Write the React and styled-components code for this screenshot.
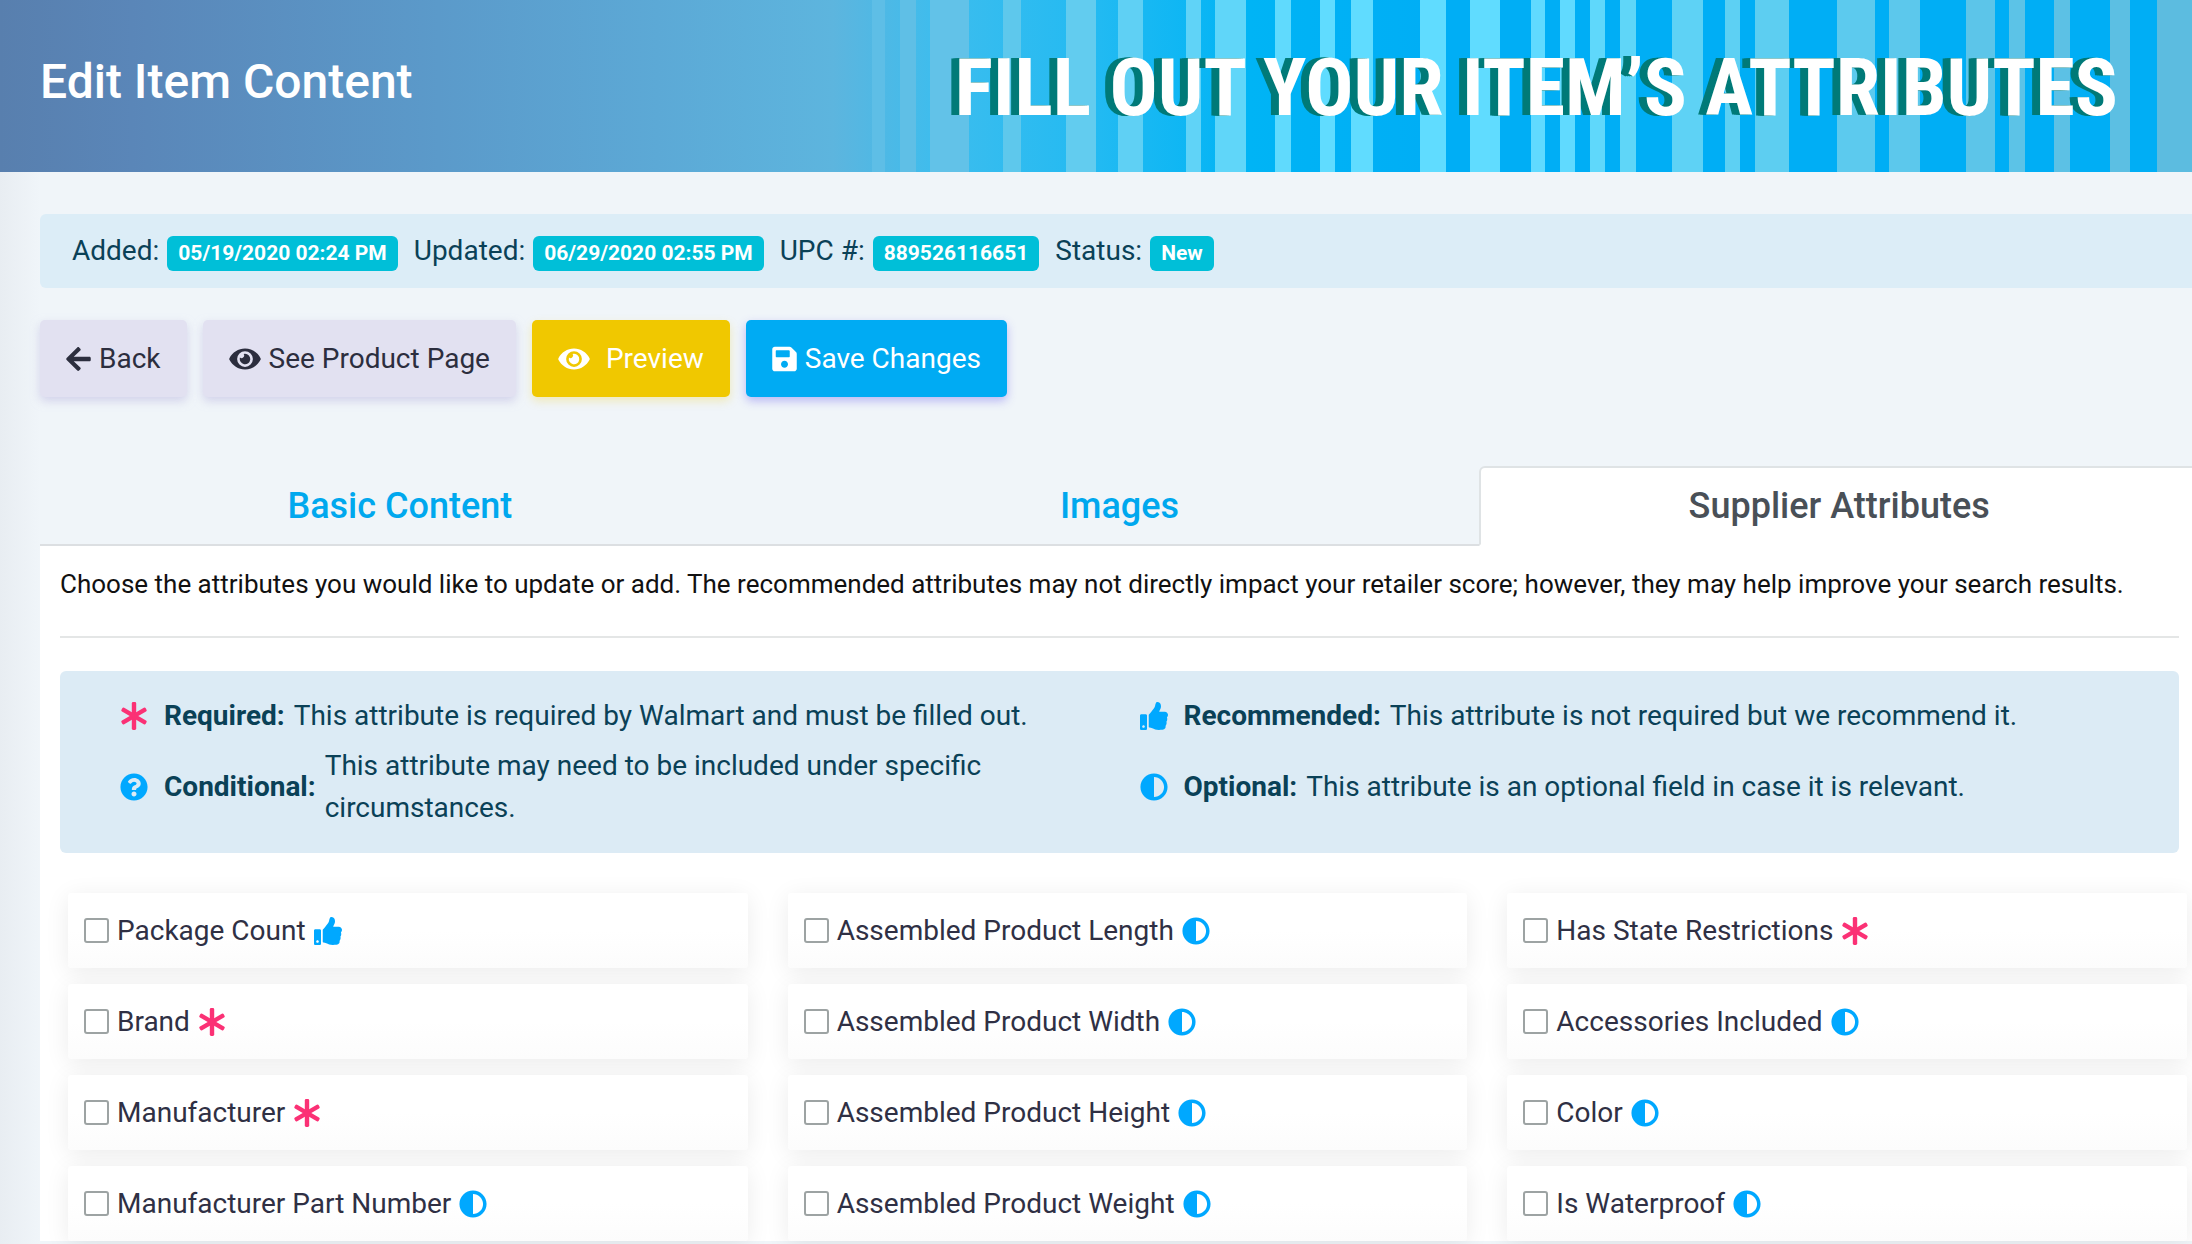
import React, { useState } from "react";
import styled, { createGlobalStyle, css } from "styled-components";
import {
  FaAdjust,
  FaArrowLeft,
  FaEye,
  FaQuestionCircle,
  FaSave,
  FaThumbsUp,
} from "react-icons/fa";

const GlobalStyle = createGlobalStyle`
  * {
    box-sizing: border-box;
  }

  body {
    margin: 0;
    background: #f0f5f9;
    color: #212529;
    font-family: Roboto, "Liberation Sans", sans-serif;
    font-size: 28px;
    line-height: 42px;
  }
`;

// [start, end, colour], positions on a 2192 wide banner
const stripes = [
  [872, 885, "#5ebee6"],
  [900, 916, "#5fbfe6"],
  [930, 969, "#62c2e8"],
  [1003, 1021, "#5ec8ec"],
  [1066, 1096, "#62ccef"],
  [1118, 1143, "#5fd0f4"],
  [1186, 1201, "#60d3f7"],
  [1215, 1246, "#60d6f9"],
  [1275, 1291, "#60dafd"],
  [1320, 1335, "#60dcff"],
  [1351, 1373, "#60dcff"],
  [1420, 1446, "#60dcff"],
  [1470, 1500, "#60dcff"],
  [1531, 1545, "#60daff"],
  [1560, 1575, "#60daff"],
  [1590, 1605, "#5fd8fb"],
  [1620, 1636, "#5fd6f8"],
  [1672, 1703, "#5ed2f5"],
  [1725, 1740, "#5dd0f3"],
  [1755, 1789, "#5dcef1"],
  [1837, 1875, "#5ccaee"],
  [1889, 1920, "#5cc8ec"],
  [1966, 1995, "#5cc5e9"],
  [2009, 2025, "#5cc3e7"],
  [2054, 2070, "#5cc1e5"],
  [2110, 2130, "#5cbfe3"],
  [2157, 2192, "#5cbce0"],
];

const pct = (x) => `${((x / 2192) * 100).toFixed(3)}%`;

const stripeStops = stripes
  .map(
    ([from, to, color]) =>
      `transparent ${pct(from)}, ${color} ${pct(from)}, ${color} ${pct(
        to
      )}, transparent ${pct(to)}`
  )
  .join(", ");

const Header = styled.header`
  display: flex;
  align-items: center;
  justify-content: space-between;
  height: 172px;
  padding: 0 74px 0 40px;
  background: linear-gradient(90deg, ${stripeStops}),
    linear-gradient(
      90deg,
      #587fae 0%,
      #5a86b8 6%,
      #5b9aca 20%,
      #5ca9d6 30%,
      #5db5de 38%,
      #3cbdee 43%,
      #22baf2 50%,
      #00b4f5 57%,
      #00aef5 65%,
      #00aef5 100%
    );
`;

const Title = styled.h1`
  margin: 0;
  padding-bottom: 8px;
  color: #fff;
  font-size: 48px;
  font-weight: 500;
  line-height: 56px;
`;

const Slogan = styled.p`
  margin: 0;
  padding-top: 4px;
  color: #fff;
  font-family: "Roboto Condensed", "Liberation Sans Narrow", Roboto, sans-serif;
  font-size: 80px;
  font-weight: 700;
  line-height: 96px;
  text-transform: uppercase;
  white-space: nowrap;
  text-shadow: -2px 0 #007a78, -4px 0 #007a78, -6px 0 #007a78, -8px 0 #007a78;
`;

const Page = styled.main`
  min-height: calc(100vh - 172px);
  padding: 42px 0 0 40px;
  overflow: hidden;
  background: linear-gradient(90deg, #e8edf2 0, #f0f5f9 40px);
`;

const Info = styled.section`
  display: flex;
  align-items: center;
  gap: 16px;
  height: 74px;
  padding: 0 32px;
  border-radius: 6px 0 0 6px;
  background: #dcedf7;
  color: #0a4157;
`;

const InfoItem = styled.span`
  display: flex;
  align-items: baseline;
  gap: 8px;
`;

const Badge = styled.span`
  padding: 0 11px;
  border-radius: 6px;
  background: #00bfd8;
  color: #fff;
  font-size: 21px;
  font-weight: 700;
  line-height: 35px;
`;

const Actions = styled.div`
  display: flex;
  gap: 16px;
  margin: 32px 0 69px;
`;

const tones = {
  light: css`
    background: #e2e1f1;
    color: #2c2e3e;
    box-shadow: 0 4px 10px rgba(190, 186, 225, 0.6);
  `,
  warning: css`
    background: #f0c800;
    color: #fff;
    box-shadow: 0 4px 10px rgba(240, 200, 0, 0.25);
  `,
  primary: css`
    background: #00abf3;
    color: #fff;
    box-shadow: 0 4px 10px rgba(120, 110, 240, 0.45);
  `,
};

const Button = styled.button`
  display: flex;
  align-items: center;
  gap: ${({ $spaced }) => ($spaced ? "16px" : "8px")};
  height: 77px;
  padding: 0 26px;
  border: 0;
  border-radius: 5px;
  font: inherit;
  cursor: pointer;
  ${({ $tone }) => tones[$tone]}

  svg {
    flex: none;
    width: ${({ $icon }) => ($icon === "wide" ? "32px" : "25px")};
    height: 28px;
  }
`;

const Wide = styled.div`
  margin-right: -7px;
`;

const Tabs = styled.div`
  display: grid;
  grid-template-columns: repeat(3, 1fr);
`;

const Tab = styled.button`
  height: 80px;
  padding: 2px 0 0;
  border: 0;
  border-bottom: 2px solid #dcdfe2;
  background: transparent;
  color: #00a8ee;
  font: inherit;
  font-size: 36px;
  font-weight: 500;
  cursor: pointer;

  ${({ $active }) =>
    $active &&
    css`
      padding: 0;
      border: 2px solid #dfe3e5;
      border-bottom-color: #fff;
      border-radius: 6px 6px 0 0;
      background: #fff;
      color: #495057;
    `}
`;

const Panel = styled.section`
  padding: 17px 20px 0;
  background: #fff;
`;

const Intro = styled.p`
  margin: 0;
  color: #111;
  font-size: 26px;
`;

const Rule = styled.hr`
  height: 2px;
  margin: 31px 0 33px;
  border: 0;
  background: #e4e6e6;
`;

const Legend = styled.div`
  display: grid;
  grid-template-columns: 1fr 1fr;
  align-items: center;
  row-gap: 8px;
  padding: 24px 40px;
  border-radius: 6px;
  background: #dcebf5;
  color: #0a4157;
`;

const LegendItem = styled.div`
  display: flex;
  align-items: center;
  padding-left: 20px;

  strong {
    margin: 0 9px 0 16px;
    font-weight: 700;
  }
`;

const Mark = styled.span`
  display: flex;
  flex: none;
  color: ${({ $color }) => $color};

  svg {
    width: 28px;
    height: 28px;
  }
`;

const Attributes = styled.div`
  display: grid;
  grid-template-columns: repeat(3, 1fr);
  gap: 16px 40px;
  padding: 40px 0 0;
  margin: 0 -8px 0 8px;
`;

const Attribute = styled.label`
  display: flex;
  align-items: center;
  gap: 8px;
  height: 75px;
  padding: 0 16px;
  border-radius: 4px;
  background: linear-gradient(#fff 50%, #fcfcfc);
  box-shadow: 0 4px 24px rgba(0, 0, 0, 0.08);
  color: #2f3044;
  cursor: pointer;
`;

const Checkbox = styled.input`
  appearance: none;
  width: 25px;
  height: 25px;
  margin: 0;
  border: 2px solid #9da3a3;
  border-radius: 3px;
  background: #fff;

  &:checked {
    background: #00abf3;
  }
`;

const Asterisk = () => (
  <svg viewBox="0 0 28 28" fill="currentColor" aria-hidden="true">
    {[0, 60, 120].map((angle) => (
      <rect
        key={angle}
        x="11.8"
        y="0"
        width="4.4"
        height="28"
        rx="1.4"
        transform={`rotate(${angle} 14 14)`}
      />
    ))}
  </svg>
);

const kinds = {
  required: { Icon: Asterisk, color: "#fb3175" },
  recommended: { Icon: FaThumbsUp, color: "#00a8ff" },
  conditional: { Icon: FaQuestionCircle, color: "#00a8ff" },
  optional: { Icon: FaAdjust, color: "#00a8ff" },
};

const info = [
  ["Added:", "05/19/2020 02:24 PM"],
  ["Updated:", "06/29/2020 02:55 PM"],
  ["UPC #:", "889526116651"],
  ["Status:", "New"],
];

const tabs = ["Basic Content", "Images", "Supplier Attributes"];

const legend = [
  ["required", "Required:", "This attribute is required by Walmart and must be filled out."],
  ["recommended", "Recommended:", "This attribute is not required but we recommend it."],
  ["conditional", "Conditional:", "This attribute may need to be included under specific circumstances."],
  ["optional", "Optional:", "This attribute is an optional field in case it is relevant."],
];

const attributes = [
  ["Package Count", "recommended"],
  ["Assembled Product Length", "optional"],
  ["Has State Restrictions", "required"],
  ["Brand", "required"],
  ["Assembled Product Width", "optional"],
  ["Accessories Included", "optional"],
  ["Manufacturer", "required"],
  ["Assembled Product Height", "optional"],
  ["Color", "optional"],
  ["Manufacturer Part Number", "optional"],
  ["Assembled Product Weight", "optional"],
  ["Is Waterproof", "optional"],
];

const KindMark = ({ kind }) => {
  const { Icon, color } = kinds[kind];
  return (
    <Mark $color={color}>
      <Icon />
    </Mark>
  );
};

const App = () => {
  const [active, setActive] = useState("Supplier Attributes");
  const [checked, setChecked] = useState({});

  const onChange = (e) => {
    const { name, checked: value } = e.target;
    setChecked({
      ...checked,
      [name]: value,
    });
  };

  return (
    <>
      <GlobalStyle />
      <Header>
        <Title>Edit Item Content</Title>
        <Slogan>Fill out your item’s attributes</Slogan>
      </Header>
      <Page>
        <Info>
          {info.map(([label, value]) => (
            <InfoItem key={label}>
              {label}
              <Badge>{value}</Badge>
            </InfoItem>
          ))}
        </Info>
        <Actions>
          <Button $tone="light">
            <FaArrowLeft />
            Back
          </Button>
          <Button $tone="light" $icon="wide">
            <FaEye />
            See Product Page
          </Button>
          <Button $tone="warning" $icon="wide" $spaced>
            <FaEye />
            Preview
          </Button>
          <Button $tone="primary">
            <FaSave />
            Save Changes
          </Button>
        </Actions>
        <Wide>
          <Tabs role="tablist">
            {tabs.map((tab) => (
              <Tab
                key={tab}
                role="tab"
                aria-selected={tab === active}
                $active={tab === active}
                onClick={() => setActive(tab)}
              >
                {tab}
              </Tab>
            ))}
          </Tabs>
          <Panel>
            <Intro>
              Choose the attributes you would like to update or add. The
              recommended attributes may not directly impact your retailer
              score; however, they may help improve your search results.
            </Intro>
            <Rule />
            <Legend>
              {legend.map(([kind, label, text]) => (
                <LegendItem key={kind}>
                  <KindMark kind={kind} />
                  <strong>{label}</strong>
                  <span>{text}</span>
                </LegendItem>
              ))}
            </Legend>
            <Attributes>
              {attributes.map(([name, kind]) => (
                <Attribute key={name}>
                  <Checkbox
                    type="checkbox"
                    name={name}
                    checked={!!checked[name]}
                    onChange={onChange}
                  />
                  {name}
                  <KindMark kind={kind} />
                </Attribute>
              ))}
            </Attributes>
          </Panel>
        </Wide>
      </Page>
    </>
  );
};

export default App;
